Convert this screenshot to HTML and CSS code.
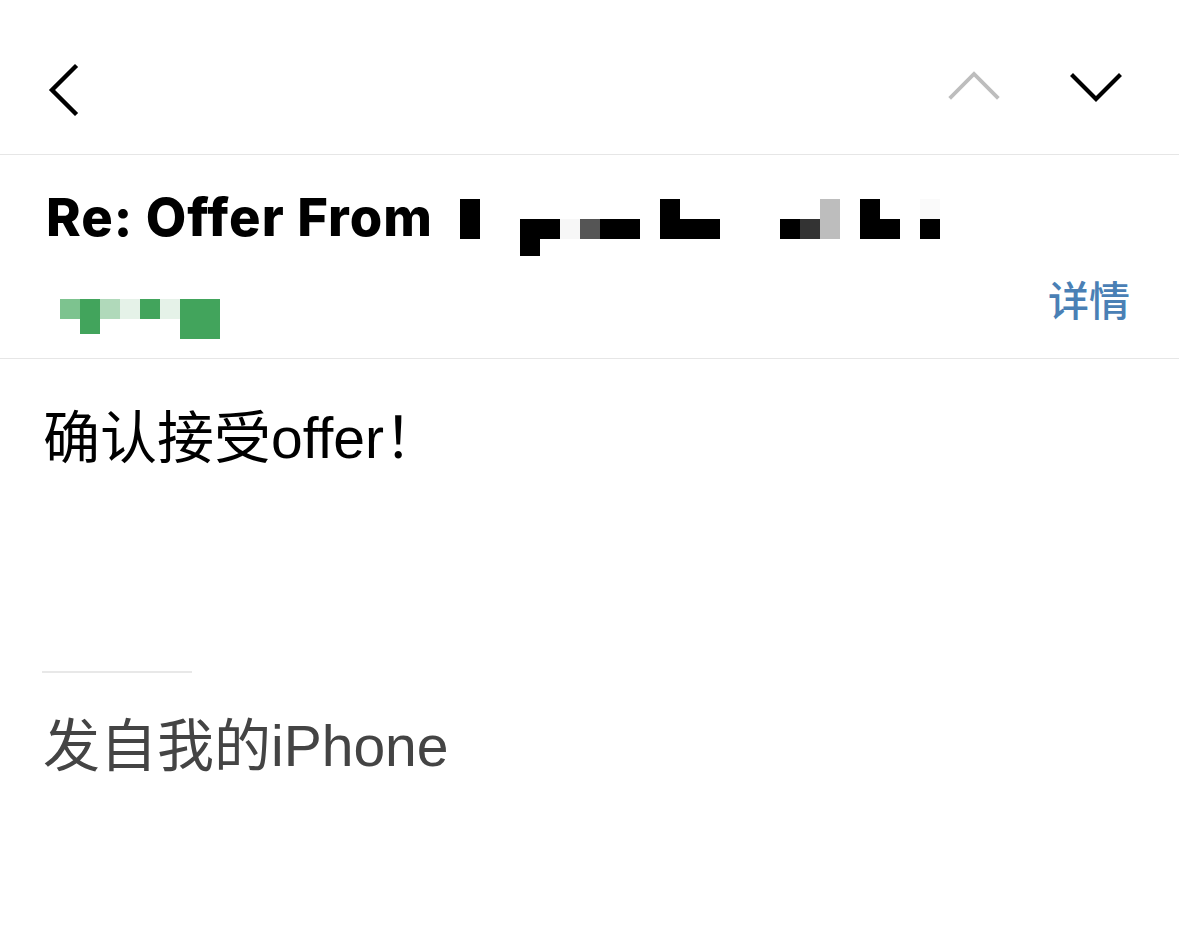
FILE: index.html
```html
<!DOCTYPE html>
<html lang="zh-CN">
<head>
<meta charset="utf-8">
<title>Re: Offer From</title>
<link rel="stylesheet" href="styles.css">
</head>
<body>
<div class="page">
  <nav class="nav">
    <svg class="ic-back" width="40" height="56" viewBox="0 0 40 56"><polyline points="30,5 7,28 30,51" fill="none" stroke="#000" stroke-width="4.4" stroke-linecap="square" stroke-linejoin="miter"/></svg>
    <div class="nav-right">
      <svg class="ic" width="56" height="56" viewBox="0 0 56 56"><polyline points="5,35 28,12 51,35" fill="none" stroke="#bdbdbd" stroke-width="3.8" stroke-linecap="square"/></svg>
      <svg class="ic" width="56" height="56" viewBox="0 0 56 56"><polyline points="5,14 28,37 51,14" fill="none" stroke="#000" stroke-width="4.2" stroke-linecap="square"/></svg>
    </div>
  </nav>

  <header class="header">
    <div class="title-row">
      <h1 class="title">Re: Offer From</h1>
      <div class="mosaic">
        <div class="col"></div>
        <div class="col"><i class="k"></i><i class="k"></i></div>
        <div class="col"></div>
        <div class="col"></div>
        <div class="col"><i></i><i class="k"></i><i class="k d"></i></div>
        <div class="col"><i></i><i class="k"></i></div>
        <div class="col"><i></i><i class="lt"></i></div>
        <div class="col"><i></i><i class="g5"></i></div>
        <div class="col"><i></i><i class="k"></i></div>
        <div class="col"><i></i><i class="k"></i></div>
        <div class="col"></div>
        <div class="col"><i class="k"></i><i class="k"></i></div>
        <div class="col"><i></i><i class="k"></i></div>
        <div class="col"><i></i><i class="k"></i></div>
        <div class="col"></div>
        <div class="col"></div>
        <div class="col"></div>
        <div class="col"><i></i><i class="k"></i></div>
        <div class="col"><i></i><i class="g3"></i></div>
        <div class="col"><i class="gb"></i><i class="gb"></i></div>
        <div class="col"></div>
        <div class="col"><i class="k"></i><i class="k"></i></div>
        <div class="col"><i></i><i class="k"></i></div>
        <div class="col"></div>
        <div class="col"><i class="lt2"></i><i class="k"></i></div>
      </div>
    </div>
    <div class="meta-row">
      <div class="sender">
        <div class="col"><i class="s1"></i></div>
        <div class="col"><i class="s2"></i><i class="s2 short"></i></div>
        <div class="col"><i class="s3"></i></div>
        <div class="col"><i class="s4"></i></div>
        <div class="col"><i class="s2"></i></div>
        <div class="col"><i class="s4"></i></div>
        <div class="col"><i class="s2"></i><i class="s2"></i></div>
        <div class="col"><i class="s2"></i><i class="s2"></i></div>
      </div>
      <a class="details">详情</a>
    </div>
  </header>

  <main class="body">
    <p class="msg">确认接受offer！</p>
    <div class="sig-rule"></div>
    <p class="sig">发自我的iPhone</p>
  </main>
</div>
</body>
</html>
```

FILE: styles.css
```css
html, body {
  margin: 0;
  padding: 0;
  background: #fff;
}

body {
  font-family: "Liberation Sans", "Noto Sans CJK SC", sans-serif;
  color: #000;
  overflow: hidden;
}

.page {
  width: 1179px;
}

.nav {
  display: flex;
  justify-content: space-between;
  align-items: flex-start;
  height: 155px;
  box-sizing: border-box;
  padding: 62px 55px 0 45px;
  border-bottom: 1px solid #e6e6e6;
}

.nav svg {
  display: block;
}

.nav-right {
  display: flex;
  gap: 66px;
}

.header {
  padding: 0 50px 0 46px;
  border-bottom: 1px solid #e6e6e6;
}

.title-row {
  display: flex;
  align-items: flex-start;
  padding-top: 32px;
}

.title {
  margin: 0;
  font-family: "Inter", "Liberation Sans", sans-serif;
  font-weight: 800;
  font-size: 52.5px;
  line-height: 60px;
  letter-spacing: 1px;
  white-space: nowrap;
  width: 392px;
  flex: none;
}

.mosaic {
  display: flex;
  margin-left: 2px;
  margin-top: 12px;
  height: 57px;
}

.col {
  display: flex;
  flex-direction: column;
  width: 20px;
}

.col i {
  display: block;
  height: 20px;
}

.col i.d {
  height: 17px;
}

.k { background: #000; }
.g5 { background: #555; }
.g3 { background: #333; }
.gb { background: #bdbdbd; }
.lt { background: #f7f7f7; }
.lt2 { background: #fafafa; }

.meta-row {
  display: flex;
  justify-content: space-between;
  align-items: flex-start;
  margin-top: 12px;
  height: 90px;
}

.sender {
  display: flex;
  margin-left: 14px;
  margin-top: 31px;
}

.sender .col i.short {
  height: 15px;
}

.s1 { background: #7dc38f; }
.s2 { background: #42a45c; }
.s3 { background: #b0d9ba; }
.s4 { background: #e5f2e8; }

.details {
  font-family: "Noto Sans CJK SC", sans-serif;
  font-size: 41px;
  line-height: 48px;
  font-weight: 500;
  color: #4a80b5;
  margin-top: 6px;
  margin-right: -1px;
}

.body {
  padding: 45px 40px 0 43px;
}

.msg, .sig {
  margin: 0;
  font-size: 57px;
  line-height: 68px;
  white-space: nowrap;
}

.msg {
  color: #000;
}

.sig-rule {
  width: 150px;
  height: 2px;
  margin-top: 199px;
  margin-left: -1px;
  background: #e8e8e8;
}

.sig {
  margin-top: 39px;
  color: #444;
}
```
